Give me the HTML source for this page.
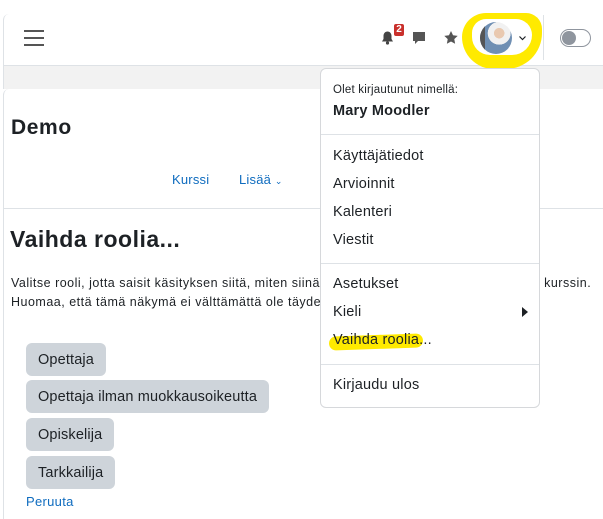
<!DOCTYPE html>
<html><head><meta charset="utf-8"><style>
*{box-sizing:border-box;margin:0;padding:0}
body{width:603px;height:511px;overflow:hidden;background:#fff;font-family:"Liberation Sans","DejaVu Sans",sans-serif;color:#1d2125;position:relative}
.abs{position:absolute}
.btn{position:absolute;left:26px;height:33px;background:#ced4da;border-radius:6px;font-size:14.5px;line-height:34px;padding:0 12px;color:#1d2125;letter-spacing:0.15px}
.dd{position:absolute;left:320px;top:68px;width:220px;height:340px;background:#fff;border:1px solid #d6d8db;border-radius:6px}
.dd .it{position:absolute;left:12px;font-size:14.5px;color:#1d2125;letter-spacing:0.2px}
.dd .hr{position:absolute;left:0;right:0;height:1px;background:#dee2e6}
</style></head><body>
<div class="abs" style="left:3px;top:14px;width:600px;height:52px;border-left:1px solid #dee2e6;border-bottom:1px solid #dee2e6;border-top-left-radius:6px"></div>
<div class="abs" style="left:3px;top:66px;width:600px;height:23px;background:#f2f2f2;border-left:1px solid #dee2e6"></div>
<div class="abs" style="left:3px;top:89px;width:600px;height:430px;border-left:1px solid #dee2e6;border-top-left-radius:6px"></div>
<div class="abs" style="left:3px;top:208px;width:600px;height:1px;background:#dee2e6"></div>
<div class="abs" style="left:24px;top:30px;width:20px;height:2px;background:#555"></div>
<div class="abs" style="left:24px;top:37px;width:20px;height:2px;background:#555"></div>
<div class="abs" style="left:24px;top:44px;width:20px;height:2px;background:#555"></div>
<svg class="abs" style="left:381px;top:31px" width="13" height="14" viewBox="0 0 13 14"><path d="M6.5 0.5c-2.5 0-4 2-4 4.5v3l-1.5 2.5h11L10.5 8V5c0-2.5-1.5-4.5-4-4.5z" fill="#444"/><circle cx="6.5" cy="12" r="1.6" fill="#444"/></svg>
<div class="abs" style="left:394px;top:24px;width:10px;height:12px;background:#c9302c;color:#fff;font-size:10px;font-weight:bold;line-height:12px;text-align:center;border-radius:2px">2</div>
<svg class="abs" style="left:412px;top:31px" width="14" height="14" viewBox="0 0 14 14"><path d="M1 1h12v9H6l-3 3v-3H1z" fill="#555"/></svg>
<svg class="abs" style="left:444px;top:31px" width="14" height="13" viewBox="0 0 24 23"><path d="M12 0l3.6 7.5 8.2 1.1-6 5.7 1.5 8.2L12 18.6 4.7 22.5l1.5-8.2-6-5.7 8.2-1.1z" fill="#555"/></svg>
<div class="abs" style="left:462px;top:13px;width:80px;height:56px;background:#ffea00;border-radius:24px 16px 36px 32px"></div>
<div class="abs" style="left:472px;top:19px;width:60px;height:36px;background:#fff;border-radius:14px 16px 20px 18px"></div>
<div class="abs" style="left:480px;top:22px;width:32px;height:32px;border-radius:50%;background:radial-gradient(circle at 60% 35%,#e9c9b0 0 18%,#f1f1f1 19% 40%,#6f8fb3 41%);overflow:hidden"><div style="position:absolute;left:0;top:0;width:5px;height:32px;background:#555"></div></div>
<svg class="abs" style="left:519px;top:36px" width="7" height="5" viewBox="0 0 7 5"><path d="M0.5 0.5l3 3 3-3" stroke="#1d2125" fill="none" stroke-width="1.2"/></svg>
<div class="abs" style="left:543px;top:15px;width:1px;height:45px;background:#dee2e6"></div>
<div class="abs" style="left:560px;top:29px;width:31px;height:18px;border:1px solid #8f959e;border-radius:9px;background:#fff"><div style="position:absolute;left:1px;top:1px;width:14px;height:14px;border-radius:50%;background:#8f959e"></div></div>
<div class="abs" style="left:11px;top:116px;font-size:21px;font-weight:bold;letter-spacing:0.6px">Demo</div>
<div class="abs" style="left:172px;top:172px;font-size:13px;color:#0f6cbf;letter-spacing:0.2px">Kurssi</div>
<div class="abs" style="left:239px;top:172px;font-size:13px;color:#0f6cbf;letter-spacing:0.2px">Lisää <span style="font-size:9px">⌄</span></div>
<div class="abs" style="left:10px;top:226px;font-size:23px;font-weight:bold;letter-spacing:0.5px">Vaihda roolia...</div>
<div class="abs" style="left:11px;top:274px;font-size:12.5px;line-height:19px;width:600px;white-space:nowrap;letter-spacing:0.5px">Valitse rooli, jotta saisit käsityksen siitä, miten siinä roolissa oleva käyttäjä näkee tämän kurssin.<br>Huomaa, että tämä näkymä ei välttämättä ole täydellinen.</div>
<div class="btn" style="top:343px">Opettaja</div>
<div class="btn" style="top:380px">Opettaja ilman muokkausoikeutta</div>
<div class="btn" style="top:418px">Opiskelija</div>
<div class="btn" style="top:456px">Tarkkailija</div>
<div class="abs" style="left:26px;top:494px;font-size:13px;color:#0f6cbf;letter-spacing:0.3px">Peruuta</div>
<div class="dd">
<div class="it" style="top:15px;font-size:11.5px">Olet kirjautunut nimellä:</div>
<div class="it" style="top:34px;font-weight:bold">Mary Moodler</div>
<div class="hr" style="top:65px"></div>
<div class="it" style="top:79px">Käyttäjätiedot</div>
<div class="it" style="top:107px">Arvioinnit</div>
<div class="it" style="top:135px">Kalenteri</div>
<div class="it" style="top:163px">Viestit</div>
<div class="hr" style="top:194px"></div>
<div class="it" style="top:207px">Asetukset</div>
<div class="it" style="top:235px">Kieli</div>
<div class="abs" style="left:201px;top:238px;width:0;height:0;border-top:5px solid transparent;border-bottom:5px solid transparent;border-left:6px solid #1d2125"></div>
<div class="abs" style="left:8px;top:266px;width:94px;height:14px;background:#ffea00;border-radius:7px;transform:rotate(-2deg)"></div>
<div class="it" style="top:263px">Vaihda roolia...</div>
<div class="hr" style="top:295px"></div>
<div class="it" style="top:308px">Kirjaudu ulos</div>
</div>
</body></html>
